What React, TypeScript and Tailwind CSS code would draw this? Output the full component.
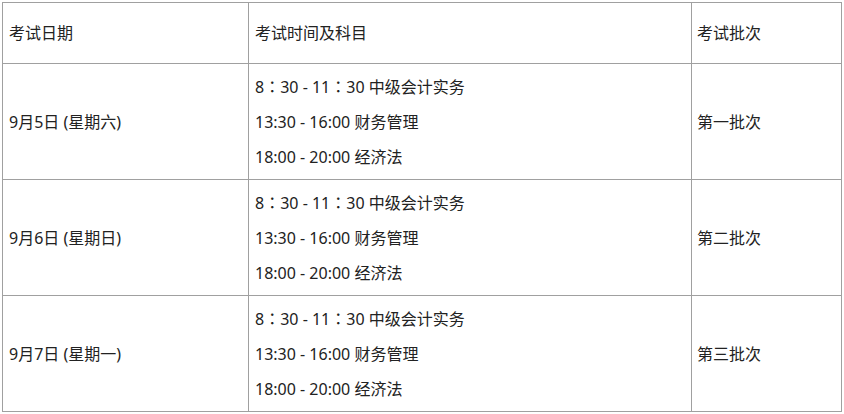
const rows = [
  { date: '9月5日 (星期六)', batch: '第一批次' },
  { date: '9月6日 (星期日)', batch: '第二批次' },
  { date: '9月7日 (星期一)', batch: '第三批次' },
];

function Colon() {
  return <span className="font-['Noto_Sans_CJK_TC',sans-serif]">：</span>;
}

function Subjects() {
  return (
    <>
      <p className="leading-[35px]">
        8<Colon />30 - 11<Colon />30 中级会计实务
      </p>
      <p className="leading-[35px]">13:30 - 16:00 财务管理</p>
      <p className="leading-[35px]">18:00 - 20:00 经济法</p>
    </>
  );
}

export default function App() {
  return (
    <div className="bg-white w-[844px] h-[414px] pt-[2px] pl-[2px] text-[16px] text-[#222] font-['Noto_Sans','Noto_Sans_CJK_SC',sans-serif]">
      <table className="table-fixed border-collapse w-[840px]">
        <colgroup>
          <col className="w-[246px]" />
          <col className="w-[443px]" />
          <col className="w-[150px]" />
        </colgroup>
        <thead>
          <tr className="h-[61px]">
            <th className="border border-[#a0a0a0] text-left font-normal pl-[6px]">考试日期</th>
            <th className="border border-[#a0a0a0] text-left font-normal pl-[6px]">考试时间及科目</th>
            <th className="border border-[#a0a0a0] text-left font-normal pl-[5px]">考试批次</th>
          </tr>
        </thead>
        <tbody>
          {rows.map((r) => (
            <tr key={r.date} className="h-[116px]">
              <td className="border border-[#a0a0a0] pl-[6px]">{r.date}</td>
              <td className="border border-[#a0a0a0] pl-[6px]">
                <Subjects />
              </td>
              <td className="border border-[#a0a0a0] pl-[5px]">{r.batch}</td>
            </tr>
          ))}
        </tbody>
      </table>
    </div>
  );
}
